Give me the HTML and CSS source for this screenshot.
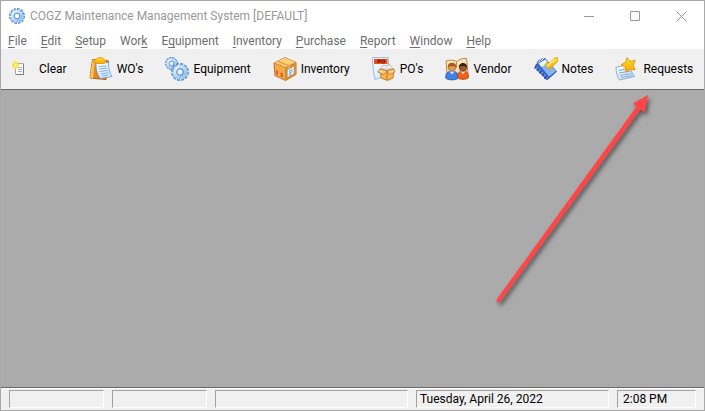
FILE: index.html
```html
<!DOCTYPE html>
<html lang="en">
<head>
  <meta charset="UTF-8">
  <meta name="viewport" content="width=device-width, initial-scale=1.0">
  <link rel="stylesheet" href="styles.css">
  <title>COGZ Maintenance Management System [DEFAULT]</title>
</head>
<body>
  <svg class="defs" width="0" height="0" aria-hidden="true">
    <defs>
      <linearGradient id="steel" x1="0" y1="0" x2="1" y2="1">
        <stop offset="0" stop-color="#e4f3ff"/>
        <stop offset="1" stop-color="#8dbcf2"/>
      </linearGradient>
      <linearGradient id="gold" x1="0" y1="0" x2="0" y2="1">
        <stop offset="0" stop-color="#ffe02c"/>
        <stop offset="1" stop-color="#fba600"/>
      </linearGradient>
      <linearGradient id="paper" x1="0" y1="0" x2="1" y2="1">
        <stop offset="0" stop-color="#ffffff"/>
        <stop offset="1" stop-color="#c5defa"/>
      </linearGradient>
      <symbol id="gear" viewBox="0 0 16 16">
        <circle cx="8" cy="8" r="6.6" fill="none" stroke="#4480cc" stroke-width="2.6" stroke-dasharray="2.5 0.956"/>
        <circle cx="8" cy="8" r="6" fill="none" stroke="#aed4fa" stroke-width="2" stroke-dasharray="1.8 1.342" stroke-dashoffset="-0.3"/>
        <circle cx="8" cy="8" r="4.400" fill="none" stroke="url(#steel)" stroke-width="3"/>
        <circle cx="8" cy="8" r="2.800" fill="none" stroke="#4480cc" stroke-width="0.9"/>
      </symbol>
    </defs>
  </svg>

  <div class="window">
    <header class="title-bar">
      <svg class="app-icon" width="16" height="16"><use href="#gear"/></svg>
      <h1>COGZ Maintenance Management System [DEFAULT]</h1>
      <div class="window-buttons">
        <button type="button" aria-label="Minimize">
          <svg width="11" height="11" viewBox="0 0 11 11"><path d="M0 5.5h10"/></svg>
        </button>
        <button type="button" aria-label="Maximize">
          <svg width="11" height="11" viewBox="0 0 11 11"><path d="M.5.5h9v9h-9z"/></svg>
        </button>
        <button type="button" aria-label="Close">
          <svg width="11" height="11" viewBox="0 0 11 11"><path d="M.5.5l10 10M10.5.5l-10 10"/></svg>
        </button>
      </div>
    </header>

    <nav class="menu-bar">
      <a href="#"><u>F</u>ile</a>
      <a href="#"><u>E</u>dit</a>
      <a href="#"><u>S</u>etup</a>
      <a href="#">Wor<u>k</u></a>
      <a href="#">E<u>q</u>uipment</a>
      <a href="#"><u>I</u>nventory</a>
      <a href="#"><u>P</u>urchase</a>
      <a href="#"><u>R</u>eport</a>
      <a href="#"><u>W</u>indow</a>
      <a href="#"><u>H</u>elp</a>
    </nav>

    <div class="toolbar">
      <button type="button">
        <svg width="24" height="24" viewBox="0 0 24 24">
          <path d="M4.5 6.5h8v11h-8z" fill="#fbfbf6" stroke="#a7a7a7"/>
          <path d="M12.5 7v10.5H5" fill="none" stroke="#7e7e88"/>
          <path d="M7 10.5h4M7 12.5h4M7 14.5h4" stroke="#a3b4cc"/>
          <path d="M4.5 4v8M1 8h7M2 5.500l5 5M7 5.500l-5 5" stroke="#f2de60" stroke-width="1.8"/>
          <circle cx="4.5" cy="8" r="2" fill="#fff05a"/>
        </svg>
        <span>Clear</span>
      </button>
      <button type="button">
        <svg width="24" height="24" viewBox="0 0 24 24">
          <path d="M3.5 2.5l16 1.5-2.5 18.5L1 21z" fill="#e08a25" stroke="#a95c12"/>
          <path d="M3.5 2.5L6 3 4 21.5 1 21z" fill="#ffc060"/>
          <path d="M7 6l12.500-.5c0 6 1 10 3.500 14l-11.500 2C8 17 7 12 7 6z" fill="url(#paper)" stroke="#6e9bd6" stroke-width=".8"/>
          <path d="M9.500 9.500l8-.5M9.800 12l8.200-.8M10.500 14.500l8-1M11.500 17l8-1.200M13 19l6-1" stroke="#83aee4"/>
          <path d="M4 4.500c1-2 3-1.500 4-3 1.500-1.500 5-1.500 6.500.3C16 3 17 3.500 17 5c0 2-11 2.500-13-.5z" fill="url(#gold)" stroke="#dd9200" stroke-width=".8"/>
        </svg>
        <span>WO's</span>
      </button>
      <button type="button">
        <svg width="24" height="24" viewBox="0 0 24 24">
          <use href="#gear" x="0" y="0" width="13" height="13"/>
          <use href="#gear" x="6" y="6" width="18" height="18"/>
        </svg>
        <span>Equipment</span>
      </button>
      <button type="button">
        <svg width="24" height="24" viewBox="0 0 24 24">
          <path d="M1 6L12 .7 23 5.500v12L12.500 23.500 2 18.500z" fill="#f3ab4a" stroke="#b8701c"/>
          <path d="M1 6L12 .7 23 5.500 12.500 10.500z" fill="#ffd078"/>
          <path d="M12.500 10.500L23 5.500v12l-10.500 6z" fill="#dc8e2e"/>
          <path d="M1 6l11.500 4.500L23 5.500M12.500 10.500v13" fill="none" stroke="#c8812c" stroke-width=".8"/>
          <path d="M6 3.700l11 4.600v3l-2.500 1v-3L4 4.800z" fill="#e7a84c"/>
          <path d="M14.500 13l6.500-3.500v7l-6.500 3.500z" fill="#f3f8ff" stroke="#8eb0dd" stroke-width=".6"/>
          <path d="M16 14.500l3.500-2M16 16.500l3.500-2M16 18l2-1" stroke="#5e91d8"/>
          <path d="M3 13l2 1v4l-2-1zM7.500 15.500l2.500 1v4l-2.500-1z" fill="#e75a2c"/>
        </svg>
        <span>Inventory</span>
      </button>
      <button type="button">
        <svg width="24" height="24" viewBox="0 0 24 24">
          <path d="M.6.6h15.500l1.500 17L3 22.500C1.500 16 .6 9 .6.6z" fill="url(#paper)" stroke="#84a9dc" stroke-width=".8"/>
          <path d="M2 2h13.500v5H2z" fill="#f34d16"/>
          <path d="M6 6V3h2.200v1.700H6M10 3h2.500v2.700H10z" fill="none" stroke="#611a0b" stroke-width=".9"/>
          <path d="M8.500 12l3-4 3 1.500 3-2 3.500 4.500z" fill="#eaf3ff" stroke="#c3a070" stroke-width=".7"/>
          <path d="M8 12l7 2 7-2-1 9-5.500 2.500L9 21z" fill="#f6b44c" stroke="#b46d1c" stroke-width=".8"/>
          <path d="M8 12l-2.500 3 6.500 2.500 3-3.500 3 3.500 5-2.500-1.500-3-6.500 2z" fill="#ffd18a" stroke="#b46d1c" stroke-width=".7"/>
          <path d="M15 15v8" stroke="#b46d1c" stroke-width=".8"/>
        </svg>
        <span>PO's</span>
      </button>
      <button type="button">
        <svg width="24" height="24" viewBox="0 0 24 24">
          <path d="M1 4c4-1.500 7-1 10.500.5C15 2 18 1 21.500 1.500L23 16l-11 2-10-1z" fill="#f8e4bb" stroke="#bd8847"/>
          <path d="M11.500 4.500v6" stroke="#bd8847"/>
          <path d="M.6 21c0-5 2.500-7 6.400-7s6.400 2 6.400 7c-2 2.500-10.800 2.500-12.800 0z" fill="#3f82e8" stroke="#1c4ea8" stroke-width=".7"/>
          <path d="M4.500 14.500L7 17.500l2.500-3z" fill="#d8eaff"/>
          <circle cx="7" cy="10" r="4" fill="#e09a50" stroke="#a3622b" stroke-width=".6"/>
          <path d="M2.800 10C2.500 4.500 11.500 4.500 11.200 10 8.500 9 5.500 9 2.800 10z" fill="#a85a1e"/>
          <path d="M12.500 20.500c0-4.500 1.500-6.500 5.500-6.500s5.600 2 5.600 6.500c-2 2.500-9 2.500-11.100 0z" fill="#f0601c" stroke="#a73410" stroke-width=".7"/>
          <path d="M15.500 14.300l2.500 3 2.500-3z" fill="#ffdac0"/>
          <circle cx="18" cy="10.500" r="3.700" fill="#9b5a2a" stroke="#53290f" stroke-width=".6"/>
          <path d="M14 10.500c-.5-6 8.500-6 8 0C20 8.500 16 8.500 14 10.500z" fill="#30221c"/>
        </svg>
        <span>Vendor</span>
      </button>
      <button type="button">
        <svg width="24" height="24" viewBox="0 0 24 24">
          <path d="M2 7.500L11.500 2 22.500 14.500 13 23 1.500 11z" fill="#3766c8" stroke="#1f479f" stroke-width=".8"/>
          <path d="M4.500 6.500L11.500 2.500 22 14l-7 5.500z" fill="#86b4f2"/>
          <path d="M4.500 6.500L11.500 2.500 14.500 6l-7 4z" fill="#e6f3ff"/>
          <path d="M2 7.500L14 20.500v2.500L1.500 11z" fill="#5b88de"/>
          <path d="M2.500 8.500L.5 11.500M5 11L3 14M7.500 13.500l-2 3M10 16.500L8 19M12.500 19l-2 3" stroke="#1a3f96" stroke-width="1.2"/>
          <path d="M3 6L5.500 2.500M6 4.500L8.500 1M9 3l2-2" stroke="#3766c8"/>
          <path d="M11 7.500l4.500 5L24 4V.8h-3L15 6.500 13 5z" fill="url(#gold)" stroke="#da8e00" stroke-width=".7"/>
          <path d="M13 9.500L20.500 2.500" stroke="#fff2a0" stroke-width="1.2"/>
        </svg>
        <span>Notes</span>
      </button>
      <button type="button">
        <svg width="24" height="24" viewBox="0 0 24 24">
          <path d="M1 10.500l14-4c0 5 1.500 9.500 4.500 13L4.500 23C2.500 19.500 1 15 1 10.500z" fill="url(#paper)" stroke="#6e9bd6" stroke-width=".8"/>
          <path d="M3.500 13.500l11-2M4 16l11.500-2M5 18.500l11.500-2M6 20.500l11-2" stroke="#7da9e2"/>
          <path d="M12 .6l3 4 5.200-1.200-2 4.800 2 4.600-5-.8-4 3.500-.7-5L6 7.800l4.600-2.500z" fill="url(#gold)" stroke="#e19100" stroke-width=".9"/>
        </svg>
        <span>Requests</span>
      </button>
    </div>

    <main class="workspace">
      <svg class="arrow" width="168" height="224" viewBox="0 0 168 224" aria-hidden="true">
        <path d="M12.600 211.300L152.300 19.500l4.400 3.300L160 5l-11.800 6.500-3.200 2.300 3.600 2.800L9 208.900a2 2 0 0 0 3.600 2.400z"/>
      </svg>
    </main>

    <footer class="status-bar">
      <div class="panel"></div>
      <div class="panel"></div>
      <div class="panel"></div>
      <div class="panel">Tuesday, April 26, 2022</div>
      <div class="panel time">2:08 PM</div>
    </footer>
  </div>
</body>
</html>
```
FILE: styles.css
```css
* {
  box-sizing: border-box;
}

body {
  margin: 0;
  font-family: Roboto, sans-serif;
  font-size: 12px;
  line-height: 16px;
  color: #000;
}

button {
  font: inherit;
  color: inherit;
  background: none;
  border: none;
  padding: 0;
}

.defs {
  position: absolute;
}

.window {
  display: flex;
  flex-direction: column;
  min-height: 100vh;
  border: 1px solid #a8a8a8;
  background-color: #fff;
}

.title-bar {
  display: flex;
  align-items: center;
  height: 30px;
  padding-left: 8px;
}

.title-bar h1 {
  flex: 1;
  margin: 0 0 0 5px;
  font-size: 12px;
  font-weight: normal;
  color: #999;
  white-space: nowrap;
}

.window-buttons {
  display: flex;
}

.window-buttons button {
  display: flex;
  align-items: center;
  justify-content: center;
  width: 46px;
  height: 30px;
}

.window-buttons path {
  fill: none;
  stroke: #999;
}

.menu-bar {
  display: flex;
  gap: 14px;
  height: 18px;
  padding: 2px 7px 0;
}

.menu-bar a {
  color: #6d6d6d;
  text-decoration: none;
}

.menu-bar u {
  text-underline-offset: 2px;
}

.toolbar {
  display: flex;
  align-items: center;
  gap: 22px;
  height: 41px;
  padding: 0 10px;
  background-color: #f0f0f0;
  border-bottom: 1px solid #696969;
}

.toolbar button {
  display: flex;
  align-items: center;
  gap: 4px;
  white-space: nowrap;
}

.toolbar button:hover {
  background-color: #e5f1fb;
}

.workspace {
  position: relative;
  flex: 1;
  background-color: #ababab;
}

.arrow {
  position: absolute;
  top: 0;
  right: 48px;
}

.arrow path {
  fill: #ff4545;
  filter: drop-shadow(2px 3px 2px rgba(0, 0, 0, 0.5));
}

.status-bar {
  display: grid;
  grid-template-columns: 95px 95px 1fr 1fr 79px;
  gap: 8px;
  padding: 2px 8px;
  background-color: #f0f0f0;
  border-top: 1px solid #696969;
  box-shadow: inset 0 1px #fff;
}

.panel {
  height: 18px;
  padding-left: 3px;
  border: 1px solid #fff;
  border-top-color: #a0a0a0;
  border-left-color: #a0a0a0;
  white-space: nowrap;
}

.time {
  padding-left: 5px;
}
```
